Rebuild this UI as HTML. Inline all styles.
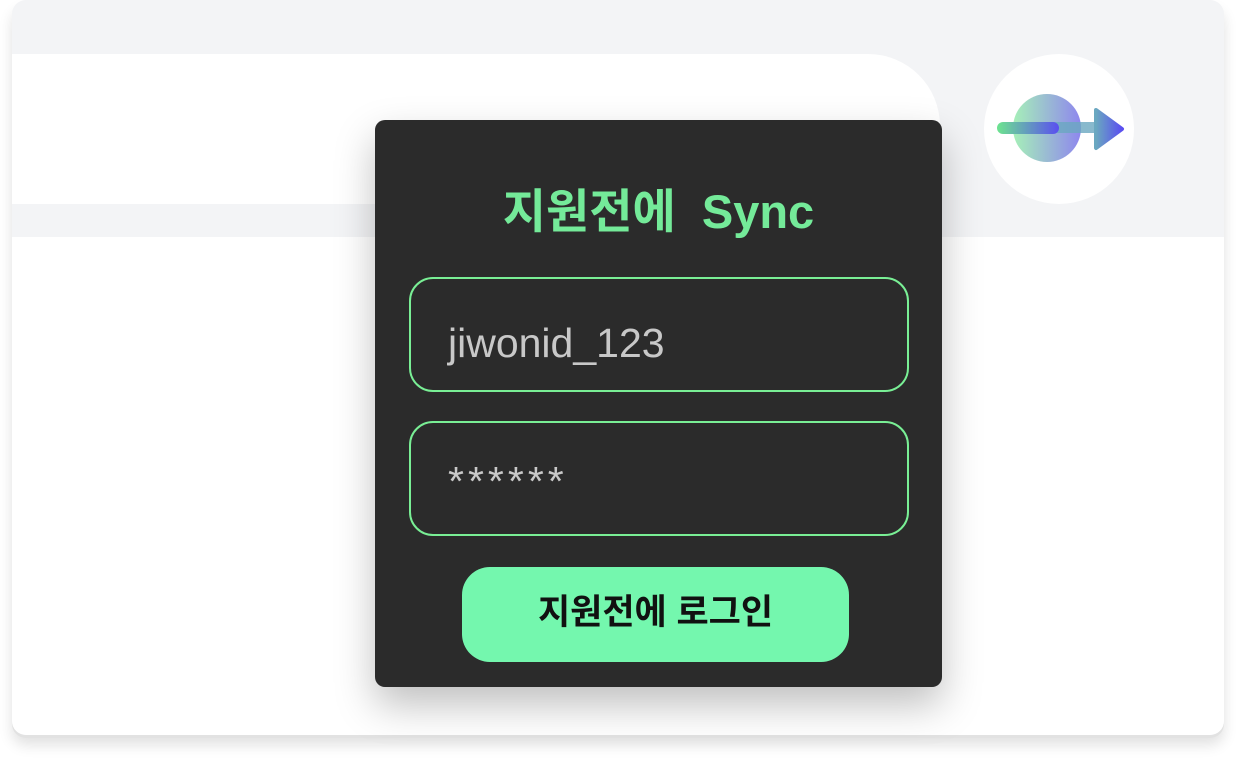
<!DOCTYPE html>
<html><head><style>
body{margin:0;width:1236px;height:765px;background:#fff;position:relative;overflow:hidden;font-family:"Liberation Sans","Noto Sans CJK KR",sans-serif}
.card{position:absolute;left:12px;top:0;width:1212px;height:735px;border-radius:14px;background:#f3f4f6;box-shadow:0 3px 0 #e2e2e2,0 10px 14px rgba(0,0,0,.12);overflow:hidden}
.white1{position:absolute;left:0;top:54px;width:928px;height:150px;background:#fff;border-top-right-radius:72px}
.white2{position:absolute;left:0;top:237px;width:1212px;height:500px;background:#fff}
.circ{position:absolute;left:984px;top:54px;width:150px;height:150px;border-radius:50%;background:#fff}
.pop{position:absolute;left:375px;top:120px;width:567px;height:567px;background:#2b2b2b;border-radius:10px;box-shadow:0 18px 40px rgba(0,0,0,.25)}
.t{position:absolute;left:0;width:567px;top:64px;text-align:center;color:#74ea99;font-weight:bold;font-size:47px;line-height:56px}
.in{position:absolute;left:409px;width:500px;height:115px;border:2px solid #79ef95;border-radius:24px;box-sizing:border-box;color:#c8c8c8;font-size:41px;padding-left:37px;line-height:128px}
.btn{position:absolute;left:462px;top:567px;width:387px;height:95px;border-radius:28px;background:#74f7ae;text-align:center;line-height:91px;font-weight:bold;font-size:35px;color:#111}
</style></head><body>
<div class="card"><div class="white1"></div><div class="white2"></div></div>
<div class="circ"></div>
<svg style="position:absolute;left:984px;top:54px" width="150" height="150" viewBox="0 0 150 150">
<defs>
<linearGradient id="g1" x1="0" x2="1"><stop offset="0" stop-color="#a6f0b8"/><stop offset="1" stop-color="#8e86ee"/></linearGradient>
<linearGradient id="g2" x1="0" x2="1"><stop offset="0" stop-color="#6de48f"/><stop offset="1" stop-color="#5a4ef0"/></linearGradient>
<linearGradient id="g3" x1="0" x2="1"><stop offset="0" stop-color="#6aa8c0"/><stop offset="1" stop-color="#5a4ef0"/></linearGradient>
</defs>
<circle cx="63" cy="74" r="34" fill="url(#g1)"/>
<rect x="62" y="68" width="50" height="11" fill="#6aa8c0" opacity=".8"/>
<path d="M112 56 L138 75 L112 94 Z" fill="url(#g3)" stroke="url(#g3)" stroke-width="4" stroke-linejoin="round"/>
<rect x="13" y="68" width="62" height="12" rx="6" fill="url(#g2)"/>
</svg>
<div class="pop"><div class="t">지원전에&nbsp; Sync</div></div>
<div class="in" style="top:277px">jiwonid_123</div>
<div class="in" style="top:421px;letter-spacing:4px;line-height:116px">******</div>
<div class="btn">지원전에 로그인</div>
</body></html>
